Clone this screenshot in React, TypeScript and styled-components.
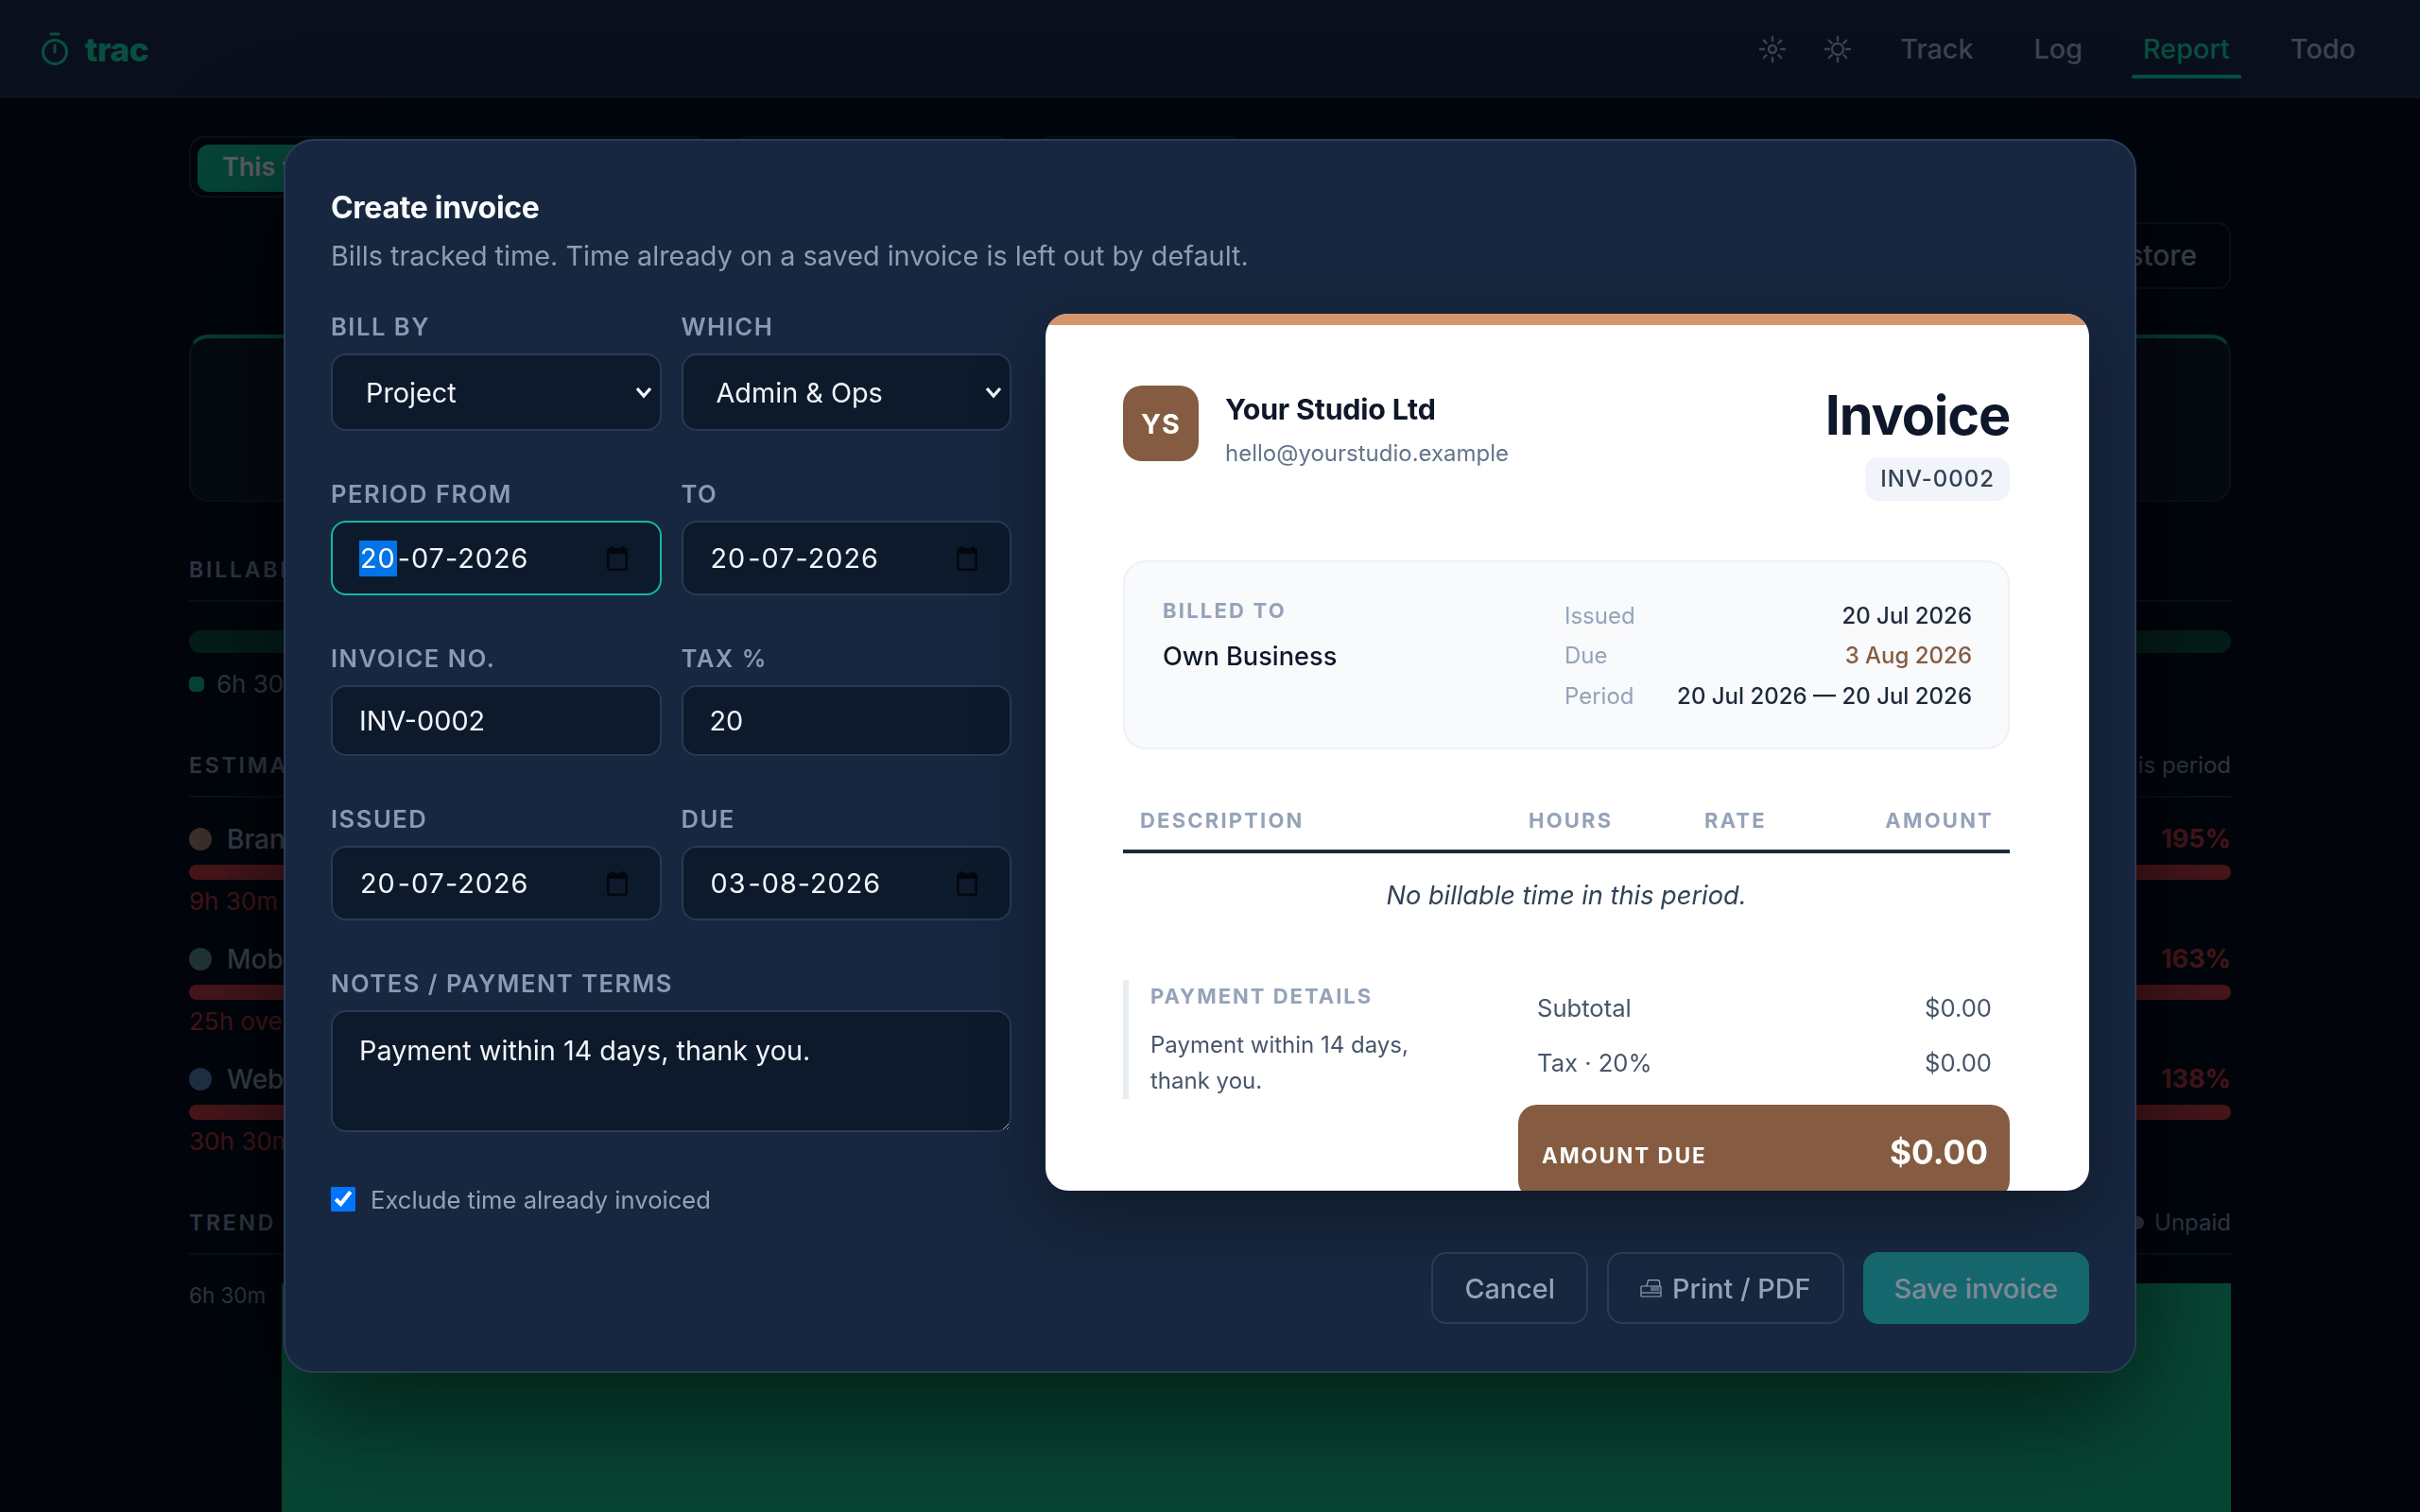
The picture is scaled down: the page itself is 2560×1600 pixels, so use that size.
import React from 'react';
import styled, { createGlobalStyle } from 'styled-components';

const GlobalStyle = createGlobalStyle`
  * { box-sizing: border-box; }
  html, body { margin: 0; height: 100%; background: #02060d; }
  body { font-family: Inter, "Noto Sans", sans-serif; overflow: hidden; }
  #root { height: 100%; }
`;

// --- page behind the modal ---

const Page = styled.div`
  height: 1600px;
  overflow: hidden;
  background: #03070e;
  color: #a9b4cd;
`;

const Nav = styled.header`
  height: 104px;
  padding: 2px 68px 0 44px;
  background: #192239;
  border-bottom: 3px solid #222c42;
  display: flex;
  align-items: center;
  justify-content: space-between;
`;

const Brand = styled.div`
  display: flex;
  align-items: center;
  gap: 18px;
  color: #14d8a4;
  font-size: 35.2px;
  font-weight: 800;
  letter-spacing: -0.5px;
`;

const NavRight = styled.nav`
  display: flex;
  align-items: center;
`;

const NavIcon = styled.span`
  display: flex;
  margin-right: 39px;
`;

const NavLink = styled.a<{ $active?: boolean }>`
  position: relative;
  margin-left: 64px;
  font-size: 28.8px;
  font-weight: 500;
  color: ${(p) => (p.$active ? '#14d8a4' : '#a9b4cd')};
  &:first-of-type { margin-left: 12px; }
  &::after {
    content: '';
    display: ${(p) => (p.$active ? 'block' : 'none')};
    position: absolute;
    left: -12px;
    right: -12px;
    bottom: -14px;
    height: 4px;
    border-radius: 3px 3px 0 0;
    background: #14d8a4;
  }
`;

const Main = styled.main`
  padding: 40px 200px 0;
`;

const TabRow = styled.div`
  display: flex;
  gap: 26px;
`;

const Seg = styled.div<{ $w: number }>`
  width: ${(p) => p.$w}px;
  height: 65px;
  padding: 7px;
  border: 2px solid #1d2638;
  border-radius: 16px;
`;

const SegChip = styled.div`
  width: 200px;
  height: 50px;
  padding-left: 26px;
  border-radius: 12px;
  background: #10b98a;
  color: #ffffff;
  font-size: 27px;
  font-weight: 600;
  line-height: 48px;
`;

const ToolRow = styled.div`
  margin-top: 26px;
  display: flex;
  justify-content: flex-end;
`;

const ToolButton = styled.div`
  width: 260px;
  height: 71px;
  padding-right: 34px;
  border: 2px solid #1d2638;
  border-radius: 14px;
  text-align: right;
  font-size: 30px;
  font-weight: 500;
  line-height: 66px;
`;

const Cards = styled.div`
  margin-top: 48px;
  display: grid;
  grid-template-columns: 1fr 1fr;
  gap: 24px;
`;

const Card = styled.div`
  height: 177px;
  background: #0e141c;
  border: 2px solid #1d2638;
  border-top: 4px solid #12a87f;
  border-radius: 20px;
`;

const SectionHead = styled.div<{ $top: number }>`
  margin-top: ${(p) => p.$top}px;
  height: 52px;
  padding-bottom: 14px;
  border-bottom: 2px solid #1d2638;
  display: flex;
  justify-content: space-between;
  line-height: 36px;
`;

const SectionTitle = styled.span`
  font-size: 23px;
  font-weight: 600;
  letter-spacing: 2.8px;
  color: #8993a8;
`;

const SectionNote = styled.span`
  display: flex;
  align-items: center;
  gap: 11px;
  font-size: 24px;
  color: #8993a8;
`;

const NoteDot = styled.i`
  width: 14px;
  height: 14px;
  border-radius: 50%;
  background: #8993a8;
`;

const BillBar = styled.div`
  margin-top: 30px;
  height: 24px;
  border-radius: 12px;
  background: #0c4a32;
`;

const Legend = styled.div`
  margin-top: 15px;
  display: flex;
  align-items: center;
  gap: 13px;
  font-size: 26px;
  line-height: 36px;
  color: #8993a8;
`;

const LegendDot = styled.i`
  width: 16px;
  height: 16px;
  border-radius: 5px;
  background: #10b981;
`;

const EstimateList = styled.div`
  margin-top: 26px;
  display: grid;
  gap: 25px;
`;

const Estimate = styled.div``;

const EstimateTop = styled.div`
  display: flex;
  align-items: center;
  line-height: 36px;
`;

const EstimateDot = styled.i<{ $color: string }>`
  width: 24px;
  height: 24px;
  margin-right: 16px;
  border-radius: 50%;
  background: ${(p) => p.$color};
`;

const EstimateName = styled.span`
  flex: 1;
  font-size: 28px;
  font-weight: 500;
  color: #9ea8ba;
`;

const EstimatePct = styled.span`
  font-size: 27px;
  font-weight: 700;
  color: #c83636;
`;

const EstimateBar = styled.div`
  margin-top: 9px;
  height: 16px;
  border-radius: 8px;
  background: #c83636;
`;

const EstimateNote = styled.div`
  margin-top: 5px;
  font-size: 26px;
  line-height: 36px;
  color: #c03030;
`;

const ChartRow = styled.div`
  margin-top: 30px;
  display: flex;
  height: 300px;
`;

const Axis = styled.div`
  width: 98px;
  font-size: 22.4px;
  line-height: 26px;
  color: #8993a8;
  display: flex;
  flex-direction: column;
  justify-content: space-between;
`;

const AxisZero = styled.span`
  padding-right: 16px;
  text-align: right;
`;

const ChartArea = styled.div`
  flex: 1;
  background: #15bd7d;
`;

// --- modal ---

const Overlay = styled.div`
  position: fixed;
  inset: 0;
  background: rgba(2, 6, 13, 0.65);
  display: flex;
  align-items: center;
  justify-content: center;
`;

const Modal = styled.section`
  width: 1960px;
  padding: 49.5px 48px 50px;
  background: #17273f;
  border: 2px solid #2a3c57;
  border-radius: 32px;
  box-shadow: 0 40px 130px rgba(0, 0, 0, 0.6);
`;

const Title = styled.h2`
  margin: 0;
  font-size: 32px;
  font-weight: 700;
  line-height: 42px;
  letter-spacing: -0.3px;
  color: #f8fafc;
`;

const Subtitle = styled.p`
  margin: 8px 0 39.5px;
  font-size: 28.8px;
  line-height: 44px;
  color: #8f9db5;
`;

const Body = styled.div`
  display: grid;
  grid-template-columns: 720px 1104px;
  gap: 36px;
  align-items: start;
`;

const Form = styled.form`
  display: grid;
  grid-template-columns: 349.5px 349.5px;
  column-gap: 21px;
  row-gap: 51px;
  margin-top: -2px;
`;

const Field = styled.label<{ $wide?: boolean }>`
  display: block;
  grid-column: ${(p) => (p.$wide ? '1 / -1' : 'auto')};
`;

const FieldLabel = styled.span`
  display: block;
  height: 44px;
  font-size: 25.6px;
  font-weight: 600;
  line-height: 32px;
  letter-spacing: 1.5px;
  color: #8a9ab5;
`;

const controlBase = `
  display: block;
  width: 100%;
  background: #0d1a2c;
  border: 2px solid #273a55;
  border-radius: 16px;
  color: #f1f5f9;
  font-family: Inter, "Noto Sans", sans-serif;
  font-size: 28.8px;
  outline: none;
`;

const chevron = encodeURIComponent(
  '<svg xmlns="http://www.w3.org/2000/svg" width="20" height="14" viewBox="0 0 20 14"><path d="M3 3l7 8 7-8" fill="none" stroke="#f1f5f9" stroke-width="3.4"/></svg>'
);

const Select = styled.select`
  ${controlBase}
  height: 82px;
  padding: 0 12px 0 35px;
  appearance: none;
  background-image: url("data:image/svg+xml,${chevron}");
  background-repeat: no-repeat;
  background-position: right 7px center;
`;

const TextInput = styled.input`
  ${controlBase}
  height: 75px;
  padding: 0 28px;
`;

const DateBox = styled.div<{ $focused?: boolean }>`
  ${controlBase}
  height: 79px;
  padding: 0 34px 0 28px;
  display: flex;
  align-items: center;
  justify-content: space-between;
  letter-spacing: 1px;
  border-color: ${(p) => (p.$focused ? '#14b8a6' : '#273a55')};
`;

const DateText = styled.span`
  display: flex;
`;

const DatePart = styled.span<{ $selected?: boolean }>`
  padding: 5px 1px;
  line-height: 28px;
  background: ${(p) => (p.$selected ? '#0074e8' : 'transparent')};
  color: ${(p) => (p.$selected ? '#ffffff' : 'inherit')};
`;

const NotesArea = styled.textarea`
  ${controlBase}
  height: 129px;
  padding: 21px 28px;
  line-height: 40px;
`;

const CheckRow = styled.label`
  grid-column: 1 / -1;
  margin-top: 4px;
  height: 32px;
  display: flex;
  align-items: center;
  gap: 16px;
  font-size: 25.6px;
  color: #94a3b8;
`;

const Check = styled.input`
  width: 26px;
  height: 26px;
  margin: 0;
  accent-color: #0075ff;
`;

// --- invoice preview ---

const Preview = styled.article`
  height: 928px;
  overflow: hidden;
  background: #ffffff;
  border-radius: 24px;
  box-shadow: 0 24px 70px rgba(0, 0, 0, 0.35);
`;

const Band = styled.div`
  height: 12px;
  background: #d4956a;
`;

const Sheet = styled.div`
  padding: 64px 84px 0 82px;
`;

const SheetHead = styled.div`
  display: flex;
  justify-content: space-between;
  align-items: flex-start;
`;

const Studio = styled.div`
  display: flex;
  gap: 28px;
`;

const Logo = styled.div`
  width: 80px;
  height: 80px;
  border-radius: 20px;
  background: #855c41;
  color: #ffffff;
  font-size: 28.8px;
  font-weight: 700;
  letter-spacing: 1px;
  display: flex;
  align-items: center;
  justify-content: center;
`;

const StudioName = styled.div`
  margin-top: 6px;
  font-size: 30.4px;
  font-weight: 700;
  line-height: 38px;
  letter-spacing: -0.2px;
  color: #0f172a;
`;

const StudioMail = styled.div`
  margin-top: 10px;
  font-size: 24px;
  line-height: 36px;
  color: #64748b;
`;

const InvoiceMeta = styled.div`
  display: flex;
  flex-direction: column;
  align-items: flex-end;
`;

const InvoiceTitle = styled.h1`
  margin: 0;
  font-size: 57.6px;
  font-weight: 700;
  line-height: 62px;
  letter-spacing: -1.2px;
  color: #0f172a;
`;

const InvoiceChip = styled.div`
  margin-top: 14px;
  height: 46px;
  padding: 0 16px;
  border-radius: 14px;
  background: #f1f5f9;
  color: #334155;
  font-size: 24px;
  font-weight: 500;
  letter-spacing: 1px;
  line-height: 46px;
`;

const Billed = styled.div`
  margin-top: 63px;
  height: 200px;
  padding: 35px 38px 35px 40px;
  display: flex;
  justify-content: space-between;
  background: #f8fafc;
  border: 2px solid #eef2f6;
  border-radius: 24px;
`;

const BilledLabel = styled.div`
  font-size: 22px;
  font-weight: 700;
  line-height: 32px;
  letter-spacing: 2.2px;
  color: #94a3b8;
`;

const BilledName = styled.div`
  margin-top: 15px;
  font-size: 27.2px;
  font-weight: 500;
  line-height: 36px;
  color: #0f172a;
`;

const Dates = styled.dl`
  margin: 3.5px 0 0;
  width: 431px;
  display: grid;
  grid-template-columns: auto 1fr;
  row-gap: 6px;
  font-size: 24px;
  line-height: 36px;
`;

const DateKey = styled.dt`
  color: #94a3b8;
`;

const DateVal = styled.dd<{ $due?: boolean }>`
  margin: 0;
  text-align: right;
  font-weight: 500;
  color: ${(p) => (p.$due ? '#855c41' : '#1e293b')};
`;

const LinesHead = styled.div`
  margin-top: 48px;
  height: 62px;
  padding: 0 17px 0 18px;
  display: grid;
  grid-template-columns: 411px 186px 1fr auto;
  border-bottom: 4px solid #1e293b;
  font-size: 22px;
  font-weight: 700;
  line-height: 54px;
  letter-spacing: 2.2px;
  color: #94a3b8;
`;

const Empty = styled.div`
  height: 89px;
  text-align: center;
  font-size: 27.2px;
  font-style: italic;
  line-height: 89px;
  color: #334155;
`;

const Bottom = styled.div`
  margin-top: 45px;
  display: flex;
  justify-content: space-between;
  align-items: flex-start;
`;

const Terms = styled.div`
  width: 340px;
  height: 126px;
  padding-left: 23px;
  border-left: 6px solid #e8edf2;
`;

const TermsTitle = styled.div`
  margin-top: 1px;
  font-size: 22px;
  font-weight: 700;
  line-height: 32px;
  letter-spacing: 2px;
  color: #94a3b8;
`;

const TermsText = styled.div`
  margin-top: 17px;
  font-size: 24px;
  line-height: 38px;
  color: #475569;
`;

const Totals = styled.div`
  width: 520px;
  margin-top: 12px;
`;

const TotalRow = styled.div`
  height: 58px;
  padding: 0 19px 0 20px;
  display: flex;
  justify-content: space-between;
  font-size: 25.6px;
  line-height: 36px;
  color: #475569;
`;

const Due = styled.div`
  margin-top: 4px;
  height: 100px;
  padding: 0 23px 0 25px;
  display: flex;
  justify-content: space-between;
  align-items: center;
  border-radius: 20px;
  background: #855c41;
  color: #ffffff;
`;

const DueLabel = styled.span`
  margin-top: 6px;
  font-size: 22.4px;
  font-weight: 700;
  letter-spacing: 2px;
`;

const DueValue = styled.span`
  font-size: 35.2px;
  font-weight: 700;
`;

const Footer = styled.footer`
  margin-top: 40px;
  display: flex;
  justify-content: flex-end;
  gap: 20px;
`;

const Button = styled.button<{ $primary?: boolean }>`
  height: 76px;
  padding: 0 ${(p) => (p.$primary ? '31px' : '33px')};
  display: inline-flex;
  align-items: center;
  gap: 11px;
  border-radius: 16px;
  border: 2px solid ${(p) => (p.$primary ? '#14b8a6' : '#2a3c57')};
  background: ${(p) => (p.$primary ? '#14b8a6' : 'transparent')};
  color: ${(p) => (p.$primary ? '#ffffff' : '#94a3b8')};
  opacity: ${(p) => (p.$primary ? 0.45 : 1)};
  font-family: Inter, "Noto Sans", sans-serif;
  font-size: 28.8px;
  font-weight: 500;
`;

const TimerIcon = () => (
  <svg width="28" height="35" viewBox="0 0 28 35" fill="none" stroke="currentColor" strokeWidth="3" strokeLinecap="round">
    <line x1="10" y1="2" x2="18" y2="2" />
    <circle cx="14" cy="21" r="12.5" />
    <line x1="14" y1="14" x2="14" y2="21" />
  </svg>
);

const SunIcon = ({ r }: { r: number }) => (
  <svg width="30" height="30" viewBox="0 0 30 30" fill="none" stroke="currentColor" strokeWidth="2.4" strokeLinecap="round">
    <circle cx="15" cy="15" r={r} />
    <path d="M15 2v4M15 24v4M2 15h4M24 15h4M5.8 5.8l2.8 2.8M21.4 21.4l2.8 2.8M5.8 24.2l2.8-2.8M21.4 8.6l2.8-2.8" />
  </svg>
);

const CalendarIcon = () => (
  <svg width="22" height="26" viewBox="0 0 22 26" fill="none">
    <path d="M5 0v4M17 0v4" stroke="#03070e" strokeWidth="2.4" />
    <rect x="1.2" y="3" width="19.6" height="21.8" rx="2" stroke="#03070e" strokeWidth="2.4" />
    <rect x="1" y="3" width="20" height="5" fill="#03070e" />
  </svg>
);

const PrinterIcon = () => (
  <svg width="23" height="20" viewBox="0 0 23 20" fill="none" stroke="currentColor" strokeWidth="1.2">
    <path d="M6 8c1.6-1 2-3.4 2.4-6.4h10.4c1.4 0 2 1 2 3.4V8" />
    <rect x="1" y="8" width="21" height="11" rx="0.5" />
    <path d="M1.5 15h20" />
    <rect x="11" y="8.6" width="9.4" height="4.6" fill="currentColor" fillOpacity="0.55" stroke="none" />
  </svg>
);

const DateField = ({ value, selected }: { value: string; selected?: boolean }) => {
  const [d, m, y] = value.split('-');
  return (
    <DateBox $focused={selected}>
      <DateText>
        <DatePart $selected={selected}>{d}</DatePart>
        <DatePart>-{m}-{y}</DatePart>
      </DateText>
      <CalendarIcon />
    </DateBox>
  );
};

const estimates = [
  { name: 'Brand', color: '#a87f66', pct: '195%', note: '9h 30m over' },
  { name: 'Mobile', color: '#5a8f7c', pct: '163%', note: '25h over' },
  { name: 'Web', color: '#5b7fb0', pct: '138%', note: '30h 30m over' },
];

export default function App() {
  return (
    <>
      <GlobalStyle />
      <Page>
        <Nav>
          <Brand>
            <TimerIcon />
            trac
          </Brand>
          <NavRight>
            <NavIcon><SunIcon r={4} /></NavIcon>
            <NavIcon><SunIcon r={6} /></NavIcon>
            <NavLink>Track</NavLink>
            <NavLink>Log</NavLink>
            <NavLink $active>Report</NavLink>
            <NavLink>Todo</NavLink>
          </NavRight>
        </Nav>
        <Main>
          <TabRow>
            <Seg $w={550}><SegChip>This week</SegChip></Seg>
            <Seg $w={294} />
            <Seg $w={220} />
          </TabRow>
          <ToolRow><ToolButton>Restore</ToolButton></ToolRow>
          <Cards>
            <Card />
            <Card />
          </Cards>
          <SectionHead $top={54}><SectionTitle>BILLABLE</SectionTitle></SectionHead>
          <BillBar />
          <Legend><LegendDot />6h 30m</Legend>
          <SectionHead $top={50}>
            <SectionTitle>ESTIMATES</SectionTitle>
            <SectionNote>this period</SectionNote>
          </SectionHead>
          <EstimateList>
            {estimates.map((e) => (
              <Estimate key={e.name}>
                <EstimateTop>
                  <EstimateDot $color={e.color} />
                  <EstimateName>{e.name}</EstimateName>
                  <EstimatePct>{e.pct}</EstimatePct>
                </EstimateTop>
                <EstimateBar />
                <EstimateNote>{e.note}</EstimateNote>
              </Estimate>
            ))}
          </EstimateList>
          <SectionHead $top={50}>
            <SectionTitle>TREND</SectionTitle>
            <SectionNote><NoteDot />Unpaid</SectionNote>
          </SectionHead>
          <ChartRow>
            <Axis>
              <span>6h 30m</span>
              <AxisZero>0</AxisZero>
            </Axis>
            <ChartArea />
          </ChartRow>
        </Main>
      </Page>

      <Overlay>
        <Modal>
          <Title>Create invoice</Title>
          <Subtitle>Bills tracked time. Time already on a saved invoice is left out by default.</Subtitle>
          <Body>
            <Form>
              <Field>
                <FieldLabel>BILL BY</FieldLabel>
                <Select defaultValue="Project"><option>Project</option><option>Client</option></Select>
              </Field>
              <Field>
                <FieldLabel>WHICH</FieldLabel>
                <Select defaultValue="Admin & Ops"><option>Admin &amp; Ops</option></Select>
              </Field>
              <Field>
                <FieldLabel>PERIOD FROM</FieldLabel>
                <DateField value="20-07-2026" selected />
              </Field>
              <Field>
                <FieldLabel>TO</FieldLabel>
                <DateField value="20-07-2026" />
              </Field>
              <Field>
                <FieldLabel>INVOICE NO.</FieldLabel>
                <TextInput defaultValue="INV-0002" />
              </Field>
              <Field>
                <FieldLabel>TAX %</FieldLabel>
                <TextInput defaultValue="20" />
              </Field>
              <Field>
                <FieldLabel>ISSUED</FieldLabel>
                <DateField value="20-07-2026" />
              </Field>
              <Field>
                <FieldLabel>DUE</FieldLabel>
                <DateField value="03-08-2026" />
              </Field>
              <Field $wide>
                <FieldLabel>NOTES / PAYMENT TERMS</FieldLabel>
                <NotesArea defaultValue="Payment within 14 days, thank you." />
              </Field>
              <CheckRow>
                <Check type="checkbox" defaultChecked />
                Exclude time already invoiced
              </CheckRow>
            </Form>

            <Preview>
              <Band />
              <Sheet>
                <SheetHead>
                  <Studio>
                    <Logo>YS</Logo>
                    <div>
                      <StudioName>Your Studio Ltd</StudioName>
                      <StudioMail>hello@yourstudio.example</StudioMail>
                    </div>
                  </Studio>
                  <InvoiceMeta>
                    <InvoiceTitle>Invoice</InvoiceTitle>
                    <InvoiceChip>INV-0002</InvoiceChip>
                  </InvoiceMeta>
                </SheetHead>

                <Billed>
                  <div>
                    <BilledLabel>BILLED TO</BilledLabel>
                    <BilledName>Own Business</BilledName>
                  </div>
                  <Dates>
                    <DateKey>Issued</DateKey><DateVal>20 Jul 2026</DateVal>
                    <DateKey>Due</DateKey><DateVal $due>3 Aug 2026</DateVal>
                    <DateKey>Period</DateKey><DateVal>20 Jul 2026 — 20 Jul 2026</DateVal>
                  </Dates>
                </Billed>

                <LinesHead>
                  <span>DESCRIPTION</span>
                  <span>HOURS</span>
                  <span>RATE</span>
                  <span>AMOUNT</span>
                </LinesHead>
                <Empty>No billable time in this period.</Empty>

                <Bottom>
                  <Terms>
                    <TermsTitle>PAYMENT DETAILS</TermsTitle>
                    <TermsText>Payment within 14 days, thank you.</TermsText>
                  </Terms>
                  <Totals>
                    <TotalRow><span>Subtotal</span><span>$0.00</span></TotalRow>
                    <TotalRow><span>Tax · 20%</span><span>$0.00</span></TotalRow>
                    <Due>
                      <DueLabel>AMOUNT DUE</DueLabel>
                      <DueValue>$0.00</DueValue>
                    </Due>
                  </Totals>
                </Bottom>
              </Sheet>
            </Preview>
          </Body>
          <Footer>
            <Button>Cancel</Button>
            <Button><PrinterIcon />Print / PDF</Button>
            <Button $primary>Save invoice</Button>
          </Footer>
        </Modal>
      </Overlay>
    </>
  );
}
